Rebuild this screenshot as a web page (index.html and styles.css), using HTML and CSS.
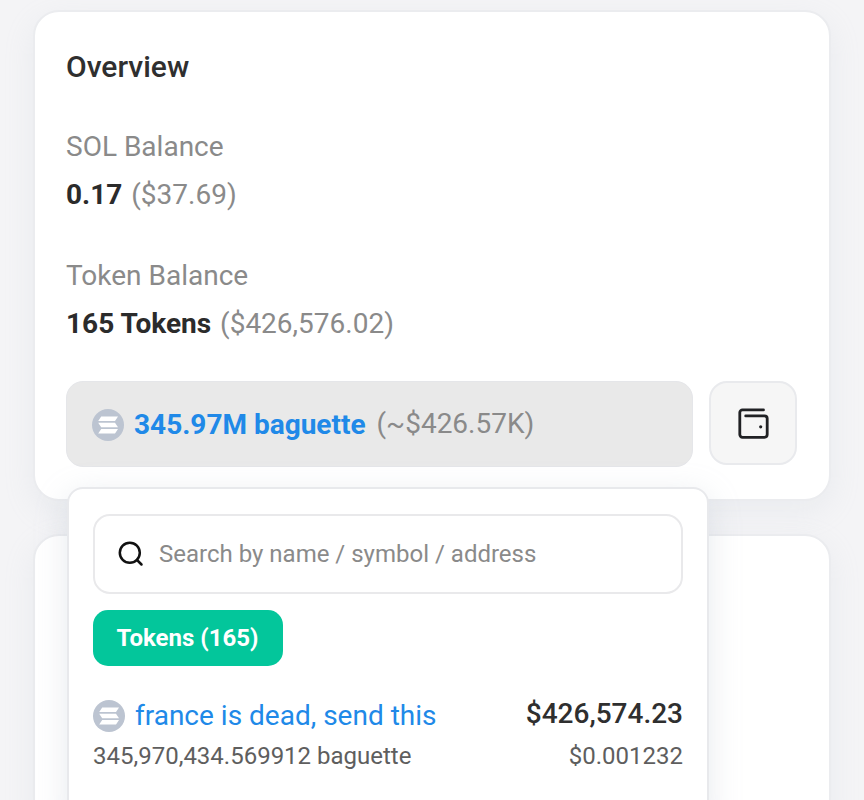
FILE: index.html
```html
<!DOCTYPE html>
<html lang="en">
<head>
  <meta charset="UTF-8" />
  <title>Overview</title>
  <link rel="stylesheet" href="styles.css">
</head>
<body>

  <div class="page">
    <div class="card overview">
      <h2>Overview</h2>

      <div class="balance">
        <div class="label">SOL Balance</div>
        <div class="value"><b>0.17</b> <span>($37.69)</span></div>
      </div>

      <div class="balance">
        <div class="label">Token Balance</div>
        <div class="value"><b>165 Tokens</b> <span>($426,576.02)</span></div>
      </div>

      <div class="select-row">
        <button class="token-select">
          <svg class="coin" viewBox="0 0 32 32">
            <circle cx="16" cy="16" r="16" fill="#bcc4d1" />
            <path d="M9.2 7.4H26l-3 4.600H6.200zM6.200 13.700H23l3 4.600H9.200zM9.200 20H26l-3 4.600H6.200z" fill="#fff" />
          </svg>
          <span class="amount">345.97M baguette</span>
          <span class="approx">(~$426.57K)</span>
        </button>
        <button class="wallet" aria-label="Wallet">
          <svg width="32" height="32" viewBox="0 0 32 32" fill="none" stroke="#202124" stroke-width="2.800" stroke-linecap="round" stroke-linejoin="round">
            <path d="M26.500 2.900H5.500a2.700 2.700 0 0 0-2.700 2.700V27.600a2.700 2.700 0 0 0 2.700 2.700h22a2.700 2.700 0 0 0 2.700-2.700V11.600a2.700 2.700 0 0 0-2.700-2.700H8.700" />
            <circle cx="23.700" cy="19.800" r="1.600" fill="#202124" stroke="none" />
          </svg>
        </button>

        <!-- Token dropdown -->
        <div class="dropdown">
          <div class="search">
            <svg width="28" height="28" viewBox="0 0 28 28" fill="none" stroke="#111" stroke-width="2.500" stroke-linecap="round">
              <circle cx="12.800" cy="12.700" r="10" />
              <path d="M20 20l4.500 4.500" />
            </svg>
            <input type="text" placeholder="Search by name / symbol / address" />
          </div>

          <button class="tab">Tokens (165)</button>

          <div class="token">
            <div class="token-name">
              <svg class="coin" viewBox="0 0 32 32">
                <circle cx="16" cy="16" r="16" fill="#bcc4d1" />
                <path d="M9.2 7.4H26l-3 4.600H6.200zM6.200 13.700H23l3 4.600H9.200zM9.200 20H26l-3 4.600H6.200z" fill="#fff" />
              </svg>
              <a href="#">france is dead, send this</a>
            </div>
            <div class="token-value">$426,574.23</div>
            <div class="token-amount">345,970,434.569912 baguette</div>
            <div class="token-price">$0.001232</div>
          </div>
        </div>
      </div>
    </div>

    <div class="card next"></div>
  </div>

</body>
</html>
```

FILE: styles.css
```css
* {
  box-sizing: border-box;
  font-family: Roboto, sans-serif;
}

body {
  margin: 0;
  background-color: #f4f4f6;
}

.page {
  height: 800px;
  padding: 10px 33px 0;
  overflow: hidden;
}

.card {
  background-color: white;
  border: 2px solid #ebecef;
  border-radius: 26px;
  box-shadow: 0 10px 30px rgba(180, 190, 205, 0.16);
}

.overview {
  height: 491px;
  padding: 37px 32px 0 31px;
}

h2 {
  margin: 0 0 42px;
  font-size: 30px;
  line-height: 36px;
  font-weight: 500;
  color: #2f2f2f;
}

.balance {
  margin-bottom: 41px;
  font-size: 28px;
  line-height: 40px;
  color: #8a8a8a;
}

.balance:nth-of-type(2) {
  margin-bottom: 37px;
}

.label {
  margin-bottom: 8px;
}

.balance b {
  margin-right: 2px;
  color: #2b2b2b;
  font-weight: 700;
}

.select-row {
  position: relative;
  display: flex;
  gap: 16px;
}

button {
  border: none;
  padding: 0;
  cursor: pointer;
}

.token-select {
  display: flex;
  align-items: center;
  width: 628px;
  height: 86px;
  padding: 1px 26px 0 25px;
  background-color: #e9e9e9;
  border: 1px solid #e5e6e9;
  border-radius: 17px;
  font-size: 28px;
}

.coin {
  width: 32px;
  height: 32px;
  margin-right: 10px;
  flex: none;
}

.amount {
  color: #2089e8;
  font-weight: 700;
}

.approx {
  margin-left: 11px;
  padding-bottom: 3px;
  color: #8a8a8a;
}

.wallet {
  display: flex;
  align-items: center;
  justify-content: center;
  width: 88px;
  height: 84px;
  background-color: #f6f6f6;
  border: 2px solid #e9eaed;
  border-radius: 18px;
}

.dropdown {
  position: absolute;
  top: 106px;
  left: 1px;
  width: 642px;
  height: 340px;
  padding: 25px 24px 0;
  background-color: white;
  border: 2px solid #e8e9ec;
  border-radius: 16px;
  box-shadow: 0 8px 32px rgba(170, 180, 195, 0.28);
}

.search {
  display: flex;
  align-items: center;
  height: 80px;
  padding: 0 23px 0 22px;
  border: 2px solid #e9e9eb;
  border-radius: 17px;
}

.search input {
  flex: 1;
  margin-left: 14px;
  padding: 0;
  border: none;
  outline: none;
  font-size: 24px;
}

.search input::placeholder {
  color: #8a8a8a;
}

.tab {
  width: 190px;
  height: 56px;
  margin: 16px 0 30px;
  padding-right: 1px;
  background-color: #03c69b;
  border-radius: 15px;
  color: white;
  font-size: 24px;
  font-weight: 700;
}

.token {
  display: grid;
  grid-template-columns: 1fr auto;
  row-gap: 4px;
  color: #5e5e5e;
  font-size: 24px;
  line-height: 32px;
}

.token-name {
  display: flex;
  align-items: center;
  height: 40px;
  font-size: 28px;
}

.token-name a {
  color: #2089e8;
  text-decoration: none;
}

.token-value {
  color: #2f2f2f;
  font-size: 28px;
  font-weight: 500;
  line-height: 36px;
  text-align: right;
}

.token-price {
  text-align: right;
}

.next {
  height: 300px;
  margin-top: 33px;
}
```
